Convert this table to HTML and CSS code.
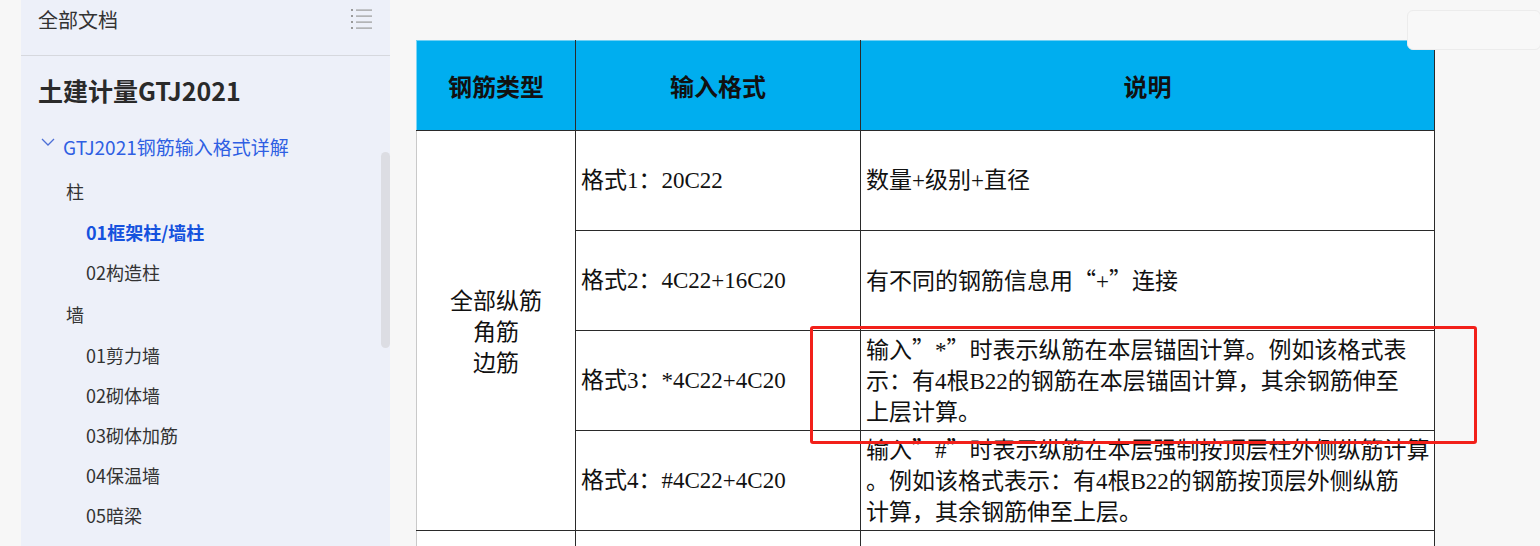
FILE: index.html
```html
<!DOCTYPE html>
<html lang="zh">
<head>
<meta charset="utf-8">
<title>GTJ2021钢筋输入格式详解</title>
<link rel="stylesheet" href="styles.css">
</head>
<body>
<div class="page">
  <aside class="sidebar">
    <div class="side-head">
      <span class="side-head-title">全部文档</span>
      <svg class="menu-icon" width="22" height="22" viewBox="0 0 22 22">
        <g fill="#9a9a9a">
          <rect x="0" y="1" width="2" height="2"/>
          <rect x="0" y="7" width="2" height="2"/>
          <rect x="0" y="13" width="2" height="2"/>
          <rect x="0" y="19" width="2" height="2"/>
          <rect x="5" y="1.5" width="16" height="1.2"/>
          <rect x="5" y="7.5" width="16" height="1.2"/>
          <rect x="5" y="13.5" width="16" height="1.2"/>
          <rect x="5" y="19.5" width="16" height="1.2"/>
        </g>
      </svg>
    </div>
    <h1 class="book-title">土建计量GTJ2021</h1>
    <div class="tree">
      <div class="tree-root">
        <svg class="chevron" width="14" height="8" viewBox="0 0 14 8"><path d="M1 1 L7 7 L13 1" fill="none" stroke="#4d6fd6" stroke-width="1.3"/></svg>
        <span>GTJ2021钢筋输入格式详解</span>
      </div>
      <div class="tree-group">柱</div>
      <div class="tree-item active">01框架柱/墙柱</div>
      <div class="tree-item">02构造柱</div>
      <div class="tree-group">墙</div>
      <div class="tree-item">01剪力墙</div>
      <div class="tree-item">02砌体墙</div>
      <div class="tree-item">03砌体加筋</div>
      <div class="tree-item">04保温墙</div>
      <div class="tree-item">05暗梁</div>
    </div>
    <div class="scrollbar"></div>
  </aside>
  <main class="content">
    <table class="rebar">
      <colgroup>
        <col class="c1"><col class="c2"><col class="c3">
      </colgroup>
      <thead>
        <tr><th>钢筋类型</th><th>输入格式</th><th>说明</th></tr>
      </thead>
      <tbody>
        <tr>
          <td class="type" rowspan="4">全部纵筋<br>角筋<br>边筋</td>
          <td>格式1：20C22</td>
          <td>数量+级别+直径</td>
        </tr>
        <tr>
          <td>格式2：4C22+16C20</td>
          <td>有不同的钢筋信息用<span class="q">“</span>+<span class="q">”</span>连接</td>
        </tr>
        <tr>
          <td>格式3：*4C22+4C20</td>
          <td>输入<span class="q">”</span>*<span class="q">”</span>时表示纵筋在本层锚固计算。例如该格式表<br>示：有4根B22的钢筋在本层锚固计算，其余钢筋伸至<br>上层计算。</td>
        </tr>
        <tr>
          <td>格式4：#4C22+4C20</td>
          <td>输入<span class="q">”</span>#<span class="q">”</span>时表示纵筋在本层强制按顶层柱外侧纵筋计算<br>。例如该格式表示：有4根B22的钢筋按顶层外侧纵筋<br>计算，其余钢筋伸至上层。</td>
        </tr>
        <tr class="partial">
          <td></td><td></td><td></td>
        </tr>
      </tbody>
    </table>
    <div class="highlight"></div>
    <div class="float-box"></div>
  </main>
</div>
</body>
</html>
```

FILE: styles.css
```css
html, body {
  margin: 0;
  padding: 0;
}
body {
  background: #f7f7f7;
  width: 1540px;
  height: 546px;
  overflow: hidden;
  font-family: "Noto Sans CJK SC", "Noto Sans", sans-serif;
}
.page {
  display: flex;
  height: 546px;
  padding-left: 21px;
}
.sidebar {
  position: relative;
  width: 369px;
  flex: none;
  background: #edf0f9;
  color: #333;
}
.side-head {
  height: 55px;
  border-bottom: 1px solid #d6d8de;
  display: flex;
  justify-content: space-between;
  align-items: flex-start;
  padding: 0 17px 0 17px;
}
.side-head-title {
  font-size: 20px;
  line-height: 40px;
  color: #333;
}
.menu-icon {
  margin-top: 8px;
}
.book-title {
  margin: 16px 0 0 17px;
  font-size: 25px;
  line-height: 36px;
  font-weight: 700;
  color: #2a2a2a;
}
.tree {
  margin-top: 18px;
}
.tree-root {
  display: flex;
  align-items: center;
  height: 40px;
  padding-left: 20px;
  color: #2f5fe3;
  font-size: 19px;
}
.chevron {
  margin: -8px 8px 0 0;
}
.tree-group {
  margin-top: 4px;
  height: 42px;
  line-height: 42px;
  padding-left: 45px;
  font-size: 18px;
  color: #333;
}
.tree-item {
  height: 40px;
  line-height: 40px;
  padding-left: 65px;
  font-size: 18px;
  color: #333;
}
.tree-item + .tree-group { margin-top: 1px; }
.tree-item.active {
  color: #1552de;
  font-weight: 700;
}
.scrollbar {
  position: absolute;
  left: 360px;
  top: 152px;
  width: 9px;
  height: 196px;
  border-radius: 5px;
  background: #dcdde3;
}
.content {
  position: relative;
  flex: 1;
  padding: 40px 0 0 26px;
}
.rebar {
  border-collapse: collapse;
  table-layout: fixed;
  width: 1018px;
  background: #fff;
  font-family: "Liberation Serif", "Noto Sans CJK SC", serif;
  font-size: 23px;
  color: #111;
}
.rebar .q {
  font-family: "Noto Sans CJK SC", sans-serif;
}
.c1 { width: 159px; }
.c2 { width: 285px; }
.c3 { width: 574px; }
.rebar th {
  height: 89px;
  background: #00aeef;
  font-family: "Noto Sans CJK SC", sans-serif;
  font-weight: 700;
  font-size: 24px;
  color: #111;
  border: 1px solid #2a2a2a;
  border-top: 1px solid #6fd0f4;
  padding: 0;
}
.rebar th:first-child {
  border-left: 1px solid #7fd6f6;
}
.rebar td {
  height: 99px;
  border: 1px solid #2a2a2a;
  padding: 0 5px;
  line-height: 31px;
  vertical-align: middle;
  white-space: nowrap;
  overflow: hidden;
}
.rebar td.type {
  text-align: center;
  border-left: 1px solid #c9c9c9;
  padding-top: 4px;
}
.rebar tr.partial td {
  height: 40px;
}
.rebar tr.partial td:first-child {
  border-left: 1px solid #c9c9c9;
}
.highlight {
  position: absolute;
  left: 420px;
  top: 326px;
  width: 661px;
  height: 112px;
  border: 3px solid #f2201a;
  border-radius: 3px;
}
.float-box {
  position: absolute;
  right: -1px;
  top: 10px;
  width: 132px;
  height: 38px;
  background: #f8f8f8;
  border: 1px solid #ececec;
  border-radius: 6px;
}
```
